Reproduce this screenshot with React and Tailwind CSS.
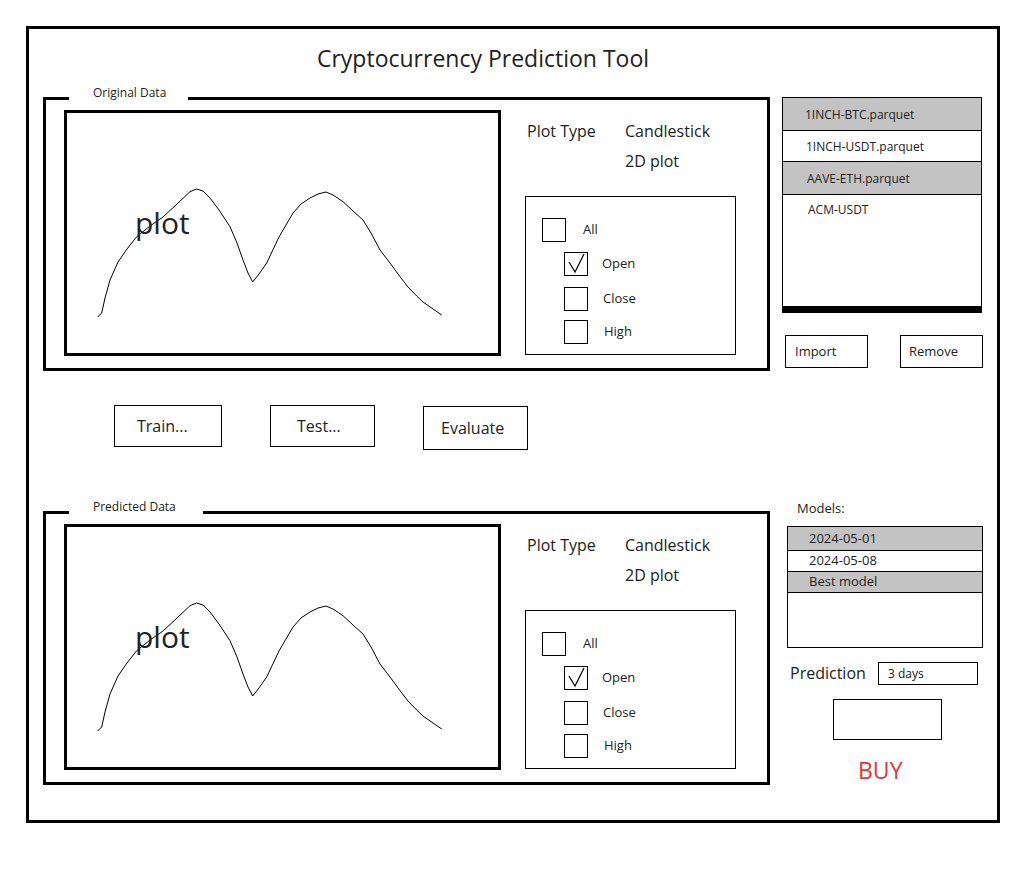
import React from 'react';

// Curve points, relative to the inner area of the plot box
const CURVE = [
  [30.7, 204], [34.7, 200], [38, 185], [43, 167], [51, 149], [60, 136], [69.7, 123.7],
  [83, 113], [96, 104], [110, 91], [123, 78.7], [129.7, 76], [136, 78], [143, 85],
  [152, 97], [163, 113.7], [170, 130], [176, 147], [181, 160], [185.7, 169],
  [192, 161], [199.7, 150], [212, 124], [226, 100], [234, 91], [243, 85], [251, 81],
  [259, 79], [266, 82], [276, 88.7], [286, 98], [296, 107], [304, 120], [313, 137],
  [323, 150], [333, 163.7], [341, 174], [349.7, 183], [356, 189], [366, 196], [374.7, 202],
];

const font = { fontFamily: '"Open Sans", "Noto Sans", sans-serif' };

function PlotBox() {
  return (
    <div className="relative h-[246px] w-[437px] shrink-0 border-[3px] border-black">
      <svg width="431" height="240" className="absolute left-0 top-0">
        <polyline
          points={CURVE.map((p) => p.join(',')).join(' ')}
          fill="none"
          stroke="black"
          strokeWidth="1"
        />
      </svg>
      <span className="absolute left-[68px] top-[95px] text-[30px] leading-none text-[#222]">
        plot
      </span>
    </div>
  );
}

function CheckBox({ checked }) {
  return (
    <div className="h-[24px] w-[24px] shrink-0 border border-black">
      {checked && (
        <svg width="22" height="22" viewBox="0 0 22 22">
          <path d="M4 9 L10 19 L19 1" fill="none" stroke="black" strokeWidth="1.2" />
        </svg>
      )}
    </div>
  );
}

function DataPanel({ title, legendWidth }) {
  return (
    <div className="relative flex h-[274px] w-[727px] border-[3px] border-black pl-[18px] pt-[10px]">
      <span
        className={`absolute -top-[15px] left-[23px] bg-white pl-[24px] text-[12px] leading-[16px] text-[#222] ${legendWidth}`}
      >
        {title}
      </span>
      <PlotBox />

      <div className="ml-[24px] flex flex-col">
        <div className="mt-[10px] flex pl-[2px] text-[16px] leading-[22px] text-[#222]">
          <span className="w-[98px]">Plot Type</span>
          <div className="flex flex-col gap-[8px]">
            <span>Candlestick</span>
            <span>2D plot</span>
          </div>
        </div>

        {/* checkbox group */}
        <div className="mt-[24px] h-[159px] w-[211px] border border-black pl-[16px] pt-[21px] text-[13px] text-[#222]">
          <div className="flex items-center">
            <CheckBox />
            <span className="ml-[17px]">All</span>
          </div>
          <div className="ml-[22px] mt-[10px] flex items-center">
            <CheckBox checked />
            <span className="ml-[14px]">Open</span>
          </div>
          <div className="ml-[22px] mt-[11px] flex items-center">
            <CheckBox />
            <span className="ml-[15px]">Close</span>
          </div>
          <div className="ml-[22px] mt-[9px] flex items-center">
            <CheckBox />
            <span className="ml-[16px]">High</span>
          </div>
        </div>
      </div>
    </div>
  );
}

function ActionButton({ label, className = '' }) {
  return (
    <div className={`flex items-center border border-black text-[16px] text-[#222] ${className}`}>
      {label}
    </div>
  );
}

export default function App() {
  const files = [
    { name: '1INCH-BTC.parquet', gray: true, h: 'h-[33px]', pl: 'pl-[22px]' },
    { name: '1INCH-USDT.parquet', gray: false, h: 'h-[31px]', pl: 'pl-[23px]' },
    { name: 'AAVE-ETH.parquet', gray: true, h: 'h-[33px]', pl: 'pl-[24px]' },
  ];
  const models = [
    { name: '2024-05-01', gray: true, h: 'h-[24px]' },
    { name: '2024-05-08', gray: false, h: 'h-[21px]' },
    { name: 'Best model', gray: true, h: 'h-[21px]' },
  ];

  return (
    <div className="min-h-[884px] bg-white pl-[26px] pt-[26px]" style={font}>
      <div className="h-[797px] w-[974px] border-[3px] border-black">
        <h1 className="mt-[13px] w-[908px] text-center text-[23px] leading-[32px] text-[#222]">
          Cryptocurrency Prediction Tool
        </h1>

        <div className="mt-[23px] flex items-start">
          {/* left column */}
          <div className="ml-[14px] flex flex-col">
            <DataPanel title="Original Data" legendWidth="w-[119px]" />

            <div className="ml-[71px] mt-[34px] flex items-start gap-[48px]">
              <ActionButton label="Train..." className="h-[42px] w-[108px] pl-[22px]" />
              <ActionButton label="Test..." className="h-[42px] w-[105px] pl-[26px]" />
              <ActionButton label="Evaluate" className="mt-[1px] h-[44px] w-[105px] pl-[17px]" />
            </div>

            <div className="mt-[61px]">
              <DataPanel title="Predicted Data" legendWidth="w-[134px]" />
            </div>
          </div>

          {/* right column */}
          <div className="ml-[12px] flex w-[202px] flex-col">
            <div className="h-[216px] w-[200px] border border-b-[7px] border-black text-[12px] text-[#222]">
              {files.map((f) => (
                <div
                  key={f.name}
                  className={`flex items-center border-b border-black pt-[2px] ${f.h} ${f.pl} ${f.gray ? 'bg-[#c3c3c3]' : 'bg-white'}`}
                >
                  {f.name}
                </div>
              ))}
              <div className="pl-[25px] pt-[6px]">ACM-USDT</div>
            </div>

            <div className="mt-[22px] flex text-[13px] text-[#222]">
              <div className="ml-[3px] flex h-[33px] w-[83px] items-center border border-black pl-[9px]">
                Import
              </div>
              <div className="ml-[32px] flex h-[33px] w-[83px] items-center border border-black pl-[8px]">
                Remove
              </div>
            </div>

            <div className="ml-[15px] mt-[131px] text-[13px] leading-[18px] text-[#222]">Models:</div>

            <div className="ml-[5px] mt-[9px] h-[122px] w-[196px] border border-black text-[13px] text-[#222]">
              {models.map((m) => (
                <div
                  key={m.name}
                  className={`flex items-center border-b border-black pl-[21px] ${m.h} ${m.gray ? 'bg-[#c3c3c3]' : 'bg-white'}`}
                >
                  {m.name}
                </div>
              ))}
            </div>

            <div className="mt-[12px] flex items-center">
              <span className="ml-[8px] w-[88px] text-[16px] leading-[22px] text-[#222]">Prediction</span>
              <div className="mt-[2px] flex h-[23px] w-[100px] items-center border border-black pl-[9px] text-[12px] text-[#222]">
                3 days
              </div>
            </div>

            <div className="ml-[51px] mt-[14px] h-[41px] w-[109px] border border-black" />

            <div className="ml-[76px] mt-[14px] text-[23px] leading-[32px] text-[#e8333a]">BUY</div>
          </div>
        </div>
      </div>
    </div>
  );
}
